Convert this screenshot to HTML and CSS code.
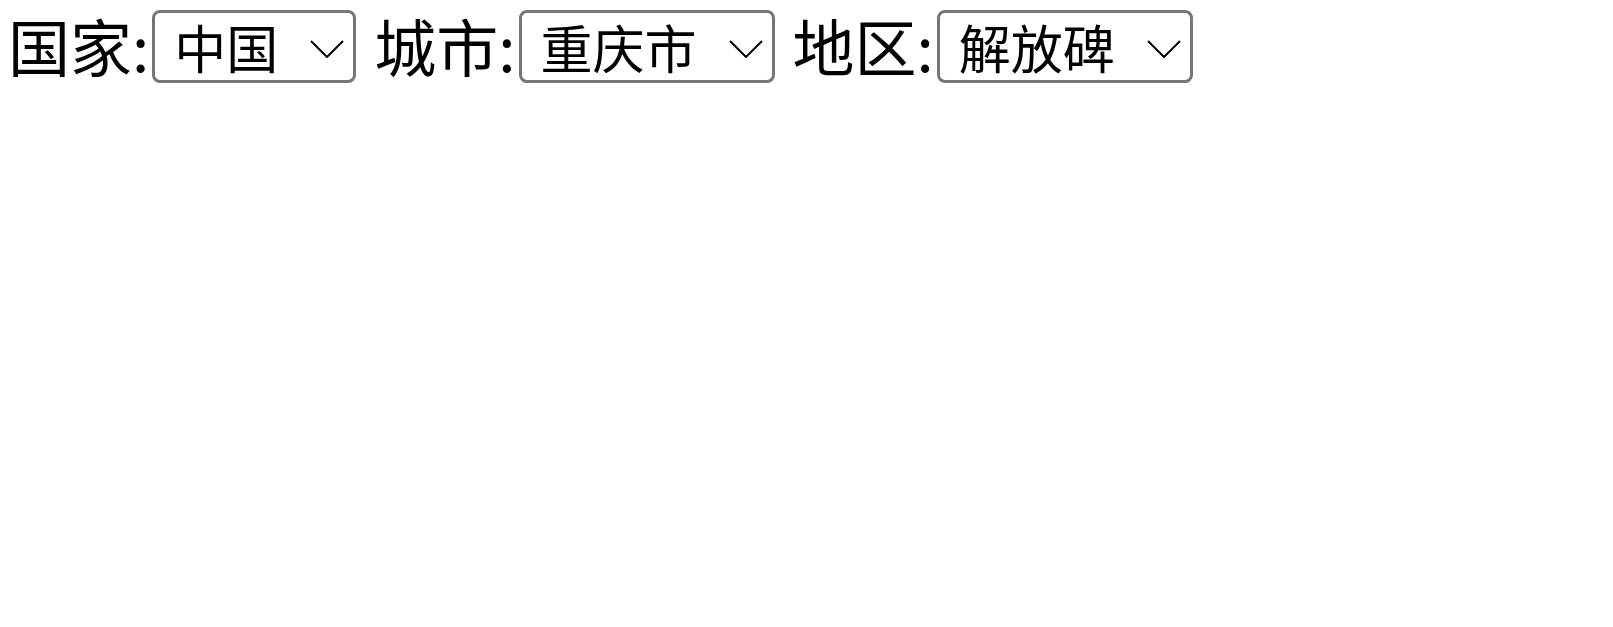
FILE: index.html
```html
<!DOCTYPE html>
<html lang="zh-CN">
<head>
<meta charset="utf-8">
<title>地区选择</title>
<link rel="stylesheet" href="styles.css">
</head>
<body>
<div class="bar">
  <label class="field"><span class="lbl">国家:</span><span class="sel-wrap"><select class="sel"><option>中国</option></select><svg class="chev" viewBox="0 0 34 18" width="34" height="18"><path d="M1 1 L17 17 L33 1" fill="none" stroke="#000" stroke-width="2"/></svg></span></label>
  <label class="field"><span class="lbl">城市:</span><span class="sel-wrap"><select class="sel"><option>重庆市</option></select><svg class="chev" viewBox="0 0 34 18" width="34" height="18"><path d="M1 1 L17 17 L33 1" fill="none" stroke="#000" stroke-width="2"/></svg></span></label>
  <label class="field"><span class="lbl">地区:</span><span class="sel-wrap"><select class="sel"><option>解放碑</option></select><svg class="chev" viewBox="0 0 34 18" width="34" height="18"><path d="M1 1 L17 17 L33 1" fill="none" stroke="#000" stroke-width="2"/></svg></span></label>
</div>
</body>
</html>
```
FILE: styles.css
```css
html, body {
  background: #fff;
}
body {
  margin: 0 8px 8px;
  font-family: "Noto Sans CJK SC", "Noto Sans", sans-serif;
  color: #000;
}
.bar {
  display: flex;
  align-items: flex-start;
  gap: 18px;
}
.field {
  display: flex;
  align-items: flex-start;
}
.lbl {
  font-size: 62px;
  line-height: normal;
  padding-right: 3px;
}
.sel-wrap {
  position: relative;
  display: block;
  margin-top: 10px;
}
.sel {
  appearance: none;
  -webkit-appearance: none;
  display: block;
  box-sizing: border-box;
  height: 73px;
  margin: 0;
  padding: 0 74px 0 19px;
  font-family: "Noto Sans CJK SC", "Noto Sans", sans-serif;
  font-size: 52px;
  line-height: 67px;
  color: #000;
  background: #fff;
  border: 3px solid #767676;
  border-radius: 8px;
}
.chev {
  position: absolute;
  right: 12px;
  top: 30px;
  pointer-events: none;
}
```
